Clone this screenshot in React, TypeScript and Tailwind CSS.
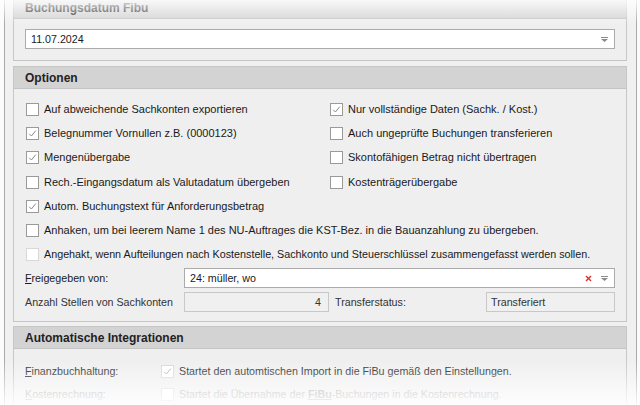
import React from "react";

const SEGOE = "font-['Liberation_Sans',Arial,sans-serif] text-[11px]";
const TAHOMA = "font-['Liberation_Sans',Arial,sans-serif] text-[10.7px]";

function Check({ checked, disabled }: { checked?: boolean; disabled?: boolean }) {
  return (
    <span
      className={`flex h-[13px] w-[13px] shrink-0 items-center justify-center border bg-white ${
        disabled ? "border-[#d8d8d8]" : "border-[#9a9a9a]"
      }`}
    >
      {checked && (
        <svg width="9" height="9" viewBox="0 0 9 9">
          <path d="M1.2 4.8 L3.4 7 L7.8 1.6" fill="none" stroke={disabled ? "#b0b0b0" : "#8a8a8a"} strokeWidth="1" />
        </svg>
      )}
    </span>
  );
}

function Row({ label, checked, disabled, tall, small }: { label: string; checked?: boolean; disabled?: boolean; tall?: boolean; small?: boolean }) {
  return (
    <div className={`flex items-center gap-[5px] ${tall ? "h-[25px]" : "h-[24px]"}`}>
      <Check checked={checked} disabled={disabled} />
      <span className={`${small ? "font-['Liberation_Sans',Arial,sans-serif] text-[10.75px]" : SEGOE} text-[#1a1a1a] whitespace-nowrap`}>{label}</span>
    </div>
  );
}

function Arrow() {
  return (
    <svg width="7" height="5" viewBox="0 0 7 5">
      <rect x="0" y="0" width="7" height="1" fill="#8a8a8a" />
      <path d="M0 2 H7 L3.5 5 Z" fill="#8a8a8a" />
    </svg>
  );
}

function Header({ title }: { title: string }) {
  return (
    <div className="flex h-[22px] items-center border-b border-[#c4c4c4] bg-[#d3d3d3] px-[11px]">
      <span className="font-['Liberation_Sans',Arial,sans-serif] text-[12px] font-bold text-[#222]">{title}</span>
    </div>
  );
}

export default function App() {
  return (
    <div className="relative h-[405px] w-[640px] overflow-hidden bg-[#fbfbfb]">
      <div className="ml-[4px] flex h-full w-[633px] flex-col border-x border-[#a9a9a9] bg-[#f0f0f0] pl-[8px] pr-[9px]">
        {/* Panel 1 */}
        <div className="-mt-[4px] border border-[#c6c6c6] bg-[#efefef]">
          <Header title="Buchungsdatum Fibu" />
          <div className="px-[11px] pb-[11px] pt-[10px]">
            <div className="flex h-[20px] items-center justify-between border border-[#ababab] bg-white pl-[5px] pr-[6px]">
              <span className={`${TAHOMA} text-[#1a1a1a]`}>11.07.2024</span>
              <Arrow />
            </div>
          </div>
        </div>

        {/* Panel 2 */}
        <div className="mt-[5px] border border-[#c6c6c6] bg-[#efefef]">
          <Header title="Optionen" />
          <div className="px-[11px] pb-[9px] pt-[8px]">
            <div className="grid grid-cols-[304px_1fr] pl-[1px]">
              <Row label="Auf abweichende Sachkonten exportieren" />
              <Row label="Nur vollständige Daten (Sachk. / Kost.)" checked />
              <Row label="Belegnummer Vornullen z.B. (0000123)" checked />
              <Row label="Auch ungeprüfte Buchungen transferieren" />
              <Row label="Mengenübergabe" checked tall />
              <Row label="Skontofähigen Betrag nicht übertragen" tall />
              <Row label="Rech.-Eingangsdatum als Valutadatum übergeben" />
              <Row label="Kostenträgerübergabe" />
              <Row label="Autom. Buchungstext für Anforderungsbetrag" checked />
              <div />
            </div>
            <div className="pl-[1px]">
              <Row label="Anhaken, um bei leerem Name 1 des NU-Auftrages die KST-Bez. in die Bauanzahlung zu übergeben." />
              <Row small label="Angehakt, wenn Aufteilungen nach Kostenstelle, Sachkonto und Steuerschlüssel zusammengefasst werden sollen." disabled />
            </div>
            <div className="mt-[2px] flex h-[20px] items-center">
              <span className={`${TAHOMA} w-[159px] text-[#1a1a1a]`}>
                <span className="underline">F</span>reigegeben von:
              </span>
              <div className="flex h-[20px] flex-1 items-center justify-between border border-[#ababab] bg-white pl-[5px] pr-[6px]">
                <span className={`${TAHOMA} text-[#1a1a1a]`}>24: müller, wo</span>
                <div className="flex items-center gap-[9px]">
                  <svg width="7" height="7" viewBox="0 0 7 7">
                    <path d="M1 1 L6 6 M6 1 L1 6" stroke="#d9302c" strokeWidth="1.4" />
                  </svg>
                  <Arrow />
                </div>
              </div>
            </div>
            <div className="mt-[4px] flex h-[20px] items-center">
              <span className={`${TAHOMA} w-[159px] text-[#333]`}>Anzahl Stellen von Sachkonten</span>
              <div className="flex h-[20px] w-[145px] items-center justify-end border border-[#c8c8c8] bg-[#f0f0f0] pr-[7px]">
                <span className={`${TAHOMA} text-[#333]`}>4</span>
              </div>
              <span className={`${TAHOMA} ml-[6px] w-[151px] text-[#333]`}>Transferstatus:</span>
              <div className="flex h-[20px] flex-1 items-center border border-[#c8c8c8] bg-[#f0f0f0] pl-[4px]">
                <span className={`${TAHOMA} text-[#333]`}>Transferiert</span>
              </div>
            </div>
          </div>
        </div>

        {/* Panel 3 */}
        <div className="mt-[4px] flex-1 border border-[#c6c6c6] bg-[#efefef]">
          <Header title="Automatische Integrationen" />
          <div className="px-[11px] pt-[11px]">
            <div className="flex h-[23px] items-center">
              <span className={`${TAHOMA} w-[136px] text-[#1a1a1a]`}>
                <span className="underline">F</span>inanzbuchhaltung:
              </span>
              <Check checked disabled />
              <span className={`${TAHOMA} ml-[5px] text-[#1a1a1a]`}>
                Startet den automtischen Import in die FiBu gemäß den Einstellungen.
              </span>
            </div>
            <div className="flex h-[23px] items-center">
              <span className={`${TAHOMA} w-[136px] text-[#a0a0a0]`}>
                <span className="underline">K</span>ostenrechnung:
              </span>
              <Check disabled />
              <span className={`${TAHOMA} ml-[5px] text-[#a0a0a0]`}>
                Startet die Übernahme der <span className="font-bold underline">FiBu</span>-Buchungen in die Kostenrechnung.
              </span>
            </div>
          </div>
        </div>
      </div>

      {/* fade overlays */}
      <div className="pointer-events-none absolute inset-x-0 top-0 h-[24px] bg-gradient-to-b from-[rgba(255,255,255,0.85)] to-transparent" />
      <div className="pointer-events-none absolute inset-x-0 bottom-0 h-[45px] bg-gradient-to-t from-[rgba(255,255,255,0.9)] to-transparent" />
    </div>
  );
}
